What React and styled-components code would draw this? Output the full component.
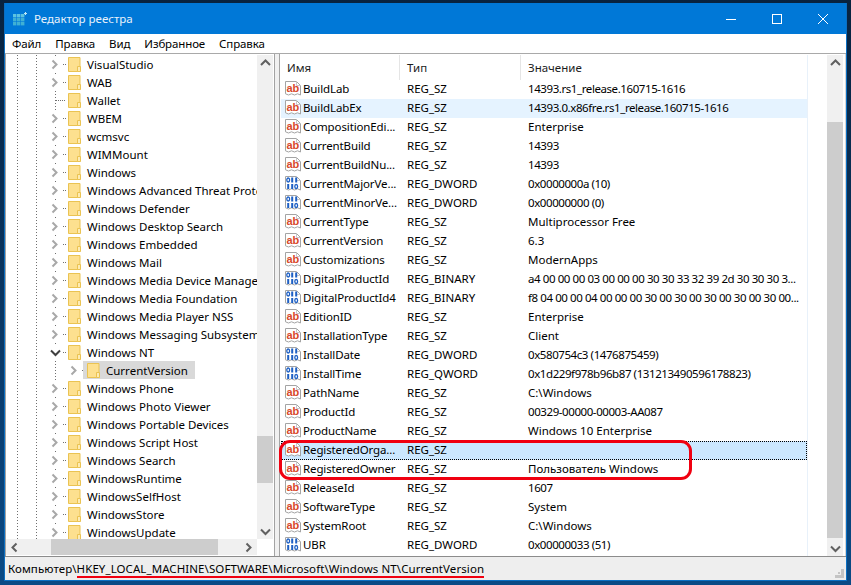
import React from "react";
import styled, { createGlobalStyle } from "styled-components";

const treeItems = [
  { name: "VisualStudio", arrow: true },
  { name: "WAB", arrow: true },
  { name: "Wallet", arrow: false },
  { name: "WBEM", arrow: true },
  { name: "wcmsvc", arrow: true },
  { name: "WIMMount", arrow: true },
  { name: "Windows", arrow: true },
  { name: "Windows Advanced Threat Protection", arrow: true },
  { name: "Windows Defender", arrow: true },
  { name: "Windows Desktop Search", arrow: true },
  { name: "Windows Embedded", arrow: true },
  { name: "Windows Mail", arrow: true },
  { name: "Windows Media Device Manager", arrow: true },
  { name: "Windows Media Foundation", arrow: true },
  { name: "Windows Media Player NSS", arrow: true },
  { name: "Windows Messaging Subsystem", arrow: true },
  { name: "Windows NT", arrow: true, open: true },
  { name: "CurrentVersion", arrow: true, child: true },
  { name: "Windows Phone", arrow: true },
  { name: "Windows Photo Viewer", arrow: true },
  { name: "Windows Portable Devices", arrow: true },
  { name: "Windows Script Host", arrow: true },
  { name: "Windows Search", arrow: true },
  { name: "WindowsRuntime", arrow: true },
  { name: "WindowsSelfHost", arrow: true },
  { name: "WindowsStore", arrow: true },
  { name: "WindowsUpdate", arrow: true },
];

const rowsBefore = [
  ["BuildLab", "REG_SZ", "14393.rs1_release.160715-1616"],
  ["BuildLabEx", "REG_SZ", "14393.0.x86fre.rs1_release.160715-1616", "hover"],
  ["CompositionEdi...", "REG_SZ", "Enterprise"],
  ["CurrentBuild", "REG_SZ", "14393"],
  ["CurrentBuildNu...", "REG_SZ", "14393"],
  ["CurrentMajorVe...", "REG_DWORD", "0x0000000a (10)"],
  ["CurrentMinorVe...", "REG_DWORD", "0x00000000 (0)"],
  ["CurrentType", "REG_SZ", "Multiprocessor Free"],
  ["CurrentVersion", "REG_SZ", "6.3"],
  ["Customizations", "REG_SZ", "ModernApps"],
  ["DigitalProductId", "REG_BINARY", "a4 00 00 00 03 00 00 00 30 30 33 32 39 2d 30 30 30 3..."],
  ["DigitalProductId4", "REG_BINARY", "f8 04 00 00 04 00 00 00 30 00 30 00 30 00 30 00 30 00..."],
  ["EditionID", "REG_SZ", "Enterprise"],
  ["InstallationType", "REG_SZ", "Client"],
  ["InstallDate", "REG_DWORD", "0x580754c3 (1476875459)"],
  ["InstallTime", "REG_QWORD", "0x1d229f978b96b87 (131213490596178823)"],
  ["PathName", "REG_SZ", "C:\\Windows"],
  ["ProductId", "REG_SZ", "00329-00000-00003-AA087"],
  ["ProductName", "REG_SZ", "Windows 10 Enterprise"],
];

const rowsMarked = [
  ["RegisteredOrga...", "REG_SZ", "", "selected"],
  ["RegisteredOwner", "REG_SZ", "Пользователь Windows"],
];

const rowsAfter = [
  ["ReleaseId", "REG_SZ", "1607"],
  ["SoftwareType", "REG_SZ", "System"],
  ["SystemRoot", "REG_SZ", "C:\\Windows"],
  ["UBR", "REG_DWORD", "0x00000033 (51)"],
];

const GlobalStyle = createGlobalStyle`
  html, body {
    margin: 0;
    padding: 0;
    width: 851px;
    height: 585px;
    overflow: hidden;
    background: linear-gradient(180deg, #08233f 0%, #0a3560 50%, #0a4a85 100%);
  }
  * {
    box-sizing: border-box;
  }
`;

const Desktop = styled.div`
  width: 851px;
  height: 585px;
  padding: 3px 4px 4px 4px;
  font-family: "Noto Sans", "Open Sans", sans-serif;
  font-size: 11.5px;
  color: #000;
`;

const Window = styled.div`
  width: 843px;
  height: 578px;
  border: 1px solid #0b6fc2;
  border-top: 0;
  display: flex;
  flex-direction: column;
  background: #f0f0f0;
`;

const TitleBar = styled.div`
  height: 31px;
  background: #0078d7;
  display: flex;
  align-items: center;
  padding-left: 8px;
  color: #e8f2fb;
`;

const TitleText = styled.span`
  margin-left: 7px;
  flex: 1;
`;

const WinButton = styled.div`
  width: 46px;
  height: 31px;
  display: flex;
  align-items: center;
  justify-content: center;
`;

const MenuBar = styled.div`
  height: 20px;
  background: #fff;
  display: flex;
  align-items: center;
  padding-left: 7px;
  border-bottom: 1px solid #a9a9a9;
  letter-spacing: -0.12px;
`;

const MenuItem = styled.span`
  margin-right: ${(p) => p.$gap}px;
`;

const Panes = styled.div`
  height: 503px;
  display: grid;
  grid-template-columns: 270px 567px;
  column-gap: 4px;
  border-bottom: 1px solid #8c8c8c;
`;

const TreePane = styled.div`
  border: 1px solid #a3a3a3;
  border-top: 0;
  border-bottom: 0;
  background: #fff;
  display: grid;
  grid-template-columns: 251px 16px;
  grid-template-rows: 484px 16px;
  padding-top: 1px;
`;

const TreeBody = styled.div`
  overflow: hidden;
`;

const TreeRow = styled.div`
  height: 18px;
  width: 251px;
  display: flex;
  align-items: center;
  white-space: nowrap;
  overflow: hidden;
  padding-left: 11px;
`;

const Guide = styled.div`
  width: ${(p) => p.$width}px;
  height: 18px;
  flex: none;
  position: relative;
  background-image: ${(p) =>
    p.$plain ? "none" : "linear-gradient(180deg, #6f6f6f 34%, transparent 34%)"};
  background-size: 1px 3px;
  background-repeat: repeat-y;
`;

const Arrow = styled.div`
  position: absolute;
  left: -5px;
  top: 2px;
  width: 11px;
  height: 14px;
  display: flex;
  align-items: center;
  justify-content: center;
  background: #fff;
`;

const Connector = styled.div`
  position: absolute;
  top: 9px;
  left: ${(p) => p.$left}px;
  width: ${(p) => p.$width}px;
  height: 1px;
  background-image: linear-gradient(90deg, #6f6f6f 50%, transparent 50%);
  background-size: 2px 1px;
`;

const FolderBox = styled.div`
  display: flex;
  align-items: center;
  flex: none;
  height: 18px;
  background: ${(p) => (p.$active ? "#d9d9d9" : "transparent")};
  margin-left: ${(p) => (p.$active ? "-4px" : "0")};
  padding: 0 ${(p) => (p.$active ? "7px" : "0")} 0 ${(p) => (p.$active ? "4px" : "0")};
`;

const FolderLabel = styled.span`
  margin-left: 6px;
`;

const VScroll = styled.div`
  width: 16px;
  background: #f0f0f0;
  display: flex;
  flex-direction: column;
`;

const HScroll = styled.div`
  height: 16px;
  background: #f0f0f0;
  display: flex;
`;

const ScrollArrow = styled.div`
  width: 16px;
  height: 16px;
  flex: none;
  display: flex;
  align-items: center;
  justify-content: center;
`;

const Track = styled.div`
  flex: 1;
  display: flex;
  flex-direction: ${(p) => (p.$horizontal ? "row" : "column")};
`;

const Thumb = styled.div`
  background: #cdcdcd;
  ${(p) =>
    p.$horizontal
      ? `margin-left: ${p.$offset}px; width: ${p.$size}px;`
      : `margin-top: ${p.$offset}px; height: ${p.$size}px;`}
`;

const ListPane = styled.div`
  border-left: 1px solid #a3a3a3;
  border-right: 1px solid #d5d5d5;
  background: #fff;
  display: flex;
  padding-top: 1px;
`;

const ListColumn = styled.div`
  width: 528px;
  flex: none;
  border-right: 1px solid #e8f1fa;
  margin-right: 19px;
`;

const ListHeader = styled.div`
  height: 25px;
  display: grid;
  grid-template-columns: 120px 121px 1fr;
  align-items: stretch;
  color: #1c1c1c;
`;

const HeaderCell = styled.div`
  padding-left: 7px;
  padding-bottom: 1px;
  border-right: 1px solid ${(p) => (p.$last ? "transparent" : "#e5e5e5")};
  display: flex;
  align-items: center;
`;

const Row = styled.div`
  height: 19px;
  margin-left: 1px;
  padding-bottom: 2px;
  display: grid;
  grid-template-columns: 119px 121px 1fr;
  align-items: center;
  background: ${(p) => (p.$kind === "hover" ? "#e5f3ff" : p.$kind === "selected" ? "#cce8ff" : "transparent")};
  outline: ${(p) => (p.$kind === "selected" ? "1px dotted #000" : "none")};
  outline-offset: -1px;
  white-space: nowrap;
`;

const NameCell = styled.div`
  display: flex;
  align-items: center;
  padding-left: 4px;
  gap: 2px;
  overflow: hidden;
  letter-spacing: -0.12px;
`;

const Cell = styled.div`
  padding-left: 7px;
  overflow: hidden;
  letter-spacing: ${(p) => (p.$tight ? "-0.42px" : "0")};
`;

const MarkedGroup = styled.div`
  position: relative;
`;

const RedFrame = styled.div`
  position: absolute;
  left: -1px;
  top: -1px;
  width: 413px;
  height: 40px;
  border: 3px solid #f00010;
  border-radius: 11px;
  pointer-events: none;
`;

const StatusBar = styled.div`
  flex: 1;
  background: #eeeeee;
  display: flex;
  align-items: flex-start;
  padding: 4px 0 0 3px;
  position: relative;
  letter-spacing: 0.08px;
`;

const Marked = styled.span`
  border-bottom: 2px solid #f00010;
`;

const Grip = styled.div`
  position: absolute;
  right: 2px;
  bottom: 2px;
  width: 9px;
  height: 9px;
  display: flex;
`;

const TitleIcon = () => (
  <svg width="14" height="14" viewBox="0 0 14 14">
    {[0, 1, 2].map((r) =>
      [0, 1, 2].map((c) => (
        <rect key={`${r}${c}`} x={c * 4} y={r * 4 + 2} width="3.4" height="3.4" fill={r === 0 ? "#5cc3e0" : "#3fb0d4"} />
      ))
    )}
    <path d="M12.5 0v3M11 1.5h3" stroke="#bfe8f5" strokeWidth="1" />
  </svg>
);

const Folder = () => (
  <svg width="13" height="15" viewBox="0 0 13 15">
    <path d="M.5.5h11.5v14H.5z" fill="#fde08f" stroke="#eac352" />
    <path d="M9.5 9.5h3v5h-3z" fill="#fdebb5" stroke="#eac352" />
  </svg>
);

const Chevron = ({ dir, color = "#a8a8a8" }) => {
  const paths = {
    right: "M2.5 1.5 6.5 5.5 2.5 9.5",
    left: "M7.5 1.5 3.5 5.5 7.5 9.5",
    up: "M1 7 5.5 2.5 10 7",
    down: "M1 3.5 5.5 8 10 3.5",
  };
  return (
    <svg width="11" height="11" viewBox="0 0 11 11">
      <path d={paths[dir]} fill="none" stroke={color} strokeWidth="2" />
    </svg>
  );
};

const Page = () => (
  <>
    <path
      d="M.5.5h11l4 4v9.5l-3-1.2-3 1.2-3-1.2-3 1.2-3-1.2z"
      fill="#fff"
      stroke="#a4a4a4"
    />
    <path d="M11.5.5v4h4" fill="none" stroke="#c8c8c8" />
  </>
);

const StringIcon = () => (
  <svg width="16" height="16" viewBox="0 0 16 16" style={{ flex: "none" }}>
    <Page />
    <text x="1.5" y="10.5" fontFamily="Liberation Sans, sans-serif" fontWeight="700" fontSize="11" fill="#d8482a">
      ab
    </text>
  </svg>
);

const BinaryIcon = () => {
  const bit = (v, x, y) =>
    v ? (
      <rect key={`${x}${y}`} x={x + 0.7} y={y} width="2" height="5" fill="#1d5fc4" />
    ) : (
      <ellipse key={`${x}${y}`} cx={x + 1.7} cy={y + 2.5} rx="1.4" ry="2" fill="none" stroke="#1d5fc4" strokeWidth="1.3" />
    );
  return (
    <svg width="16" height="16" viewBox="0 0 16 16" style={{ flex: "none" }}>
      <Page />
      {[0, 1, 1].map((v, i) => bit(v, 1.5 + i * 4, 1.5))}
      {[1, 1, 0].map((v, i) => bit(v, 1.5 + i * 4, 8))}
    </svg>
  );
};

const ValueRow = ({ row }) => {
  const digits = (row[2].match(/\d/g) || []).length;
  return (
    <Row $kind={row[3]}>
      <NameCell>
        {row[1] === "REG_SZ" ? <StringIcon /> : <BinaryIcon />}
        <span>{row[0]}</span>
      </NameCell>
      <Cell>{row[1]}</Cell>
      <Cell $tight={digits > 2}>{row[2]}</Cell>
    </Row>
  );
};

const TreeItem = ({ item }) => (
  <TreeRow>
    <Guide $width={19} />
    <Guide $width={19} />
    {item.child ? (
      <>
        <Guide $width={19} />
        <Guide $width={13} $plain>
          <Arrow>
            <Chevron dir="right" />
          </Arrow>
          <Connector $left={8} $width={2} />
        </Guide>
      </>
    ) : (
      <Guide $width={13}>
        {item.arrow ? (
          <>
            <Arrow>
              <Chevron dir={item.open ? "down" : "right"} color={item.open ? "#404040" : "#a8a8a8"} />
            </Arrow>
            <Connector $left={8} $width={3} />
          </>
        ) : (
          <Connector $left={1} $width={10} />
        )}
      </Guide>
    )}
    <FolderBox $active={item.child}>
      <Folder />
      <FolderLabel>{item.name}</FolderLabel>
    </FolderBox>
  </TreeRow>
);

const App = () => (
  <Desktop>
    <GlobalStyle />
    <Window>
      <TitleBar>
        <TitleIcon />
        <TitleText>Редактор реестра</TitleText>
        <WinButton>
          <svg width="10" height="10" viewBox="0 0 10 10">
            <path d="M0 5.5h10" stroke="#fff" />
          </svg>
        </WinButton>
        <WinButton>
          <svg width="10" height="10" viewBox="0 0 10 10">
            <rect x=".5" y=".5" width="9" height="9" fill="none" stroke="#fff" />
          </svg>
        </WinButton>
        <WinButton>
          <svg width="10" height="10" viewBox="0 0 10 10">
            <path d="M0 0l10 10M10 0L0 10" stroke="#fff" />
          </svg>
        </WinButton>
      </TitleBar>
      <MenuBar>
        <MenuItem $gap={14}>Файл</MenuItem>
        <MenuItem $gap={14}>Правка</MenuItem>
        <MenuItem $gap={14}>Вид</MenuItem>
        <MenuItem $gap={14}>Избранное</MenuItem>
        <MenuItem $gap={0}>Справка</MenuItem>
      </MenuBar>
      <Panes>
        <TreePane>
          <TreeBody>
            {treeItems.map((item) => (
              <TreeItem key={item.name} item={item} />
            ))}
          </TreeBody>
          <VScroll>
            <ScrollArrow>
              <Chevron dir="up" color="#606060" />
            </ScrollArrow>
            <Track>
              <Thumb $offset={365} $size={47} />
            </Track>
            <ScrollArrow>
              <Chevron dir="down" color="#606060" />
            </ScrollArrow>
          </VScroll>
          <HScroll>
            <ScrollArrow>
              <Chevron dir="left" color="#606060" />
            </ScrollArrow>
            <Track $horizontal>
              <Thumb $horizontal $offset={29} $size={167} />
            </Track>
            <ScrollArrow>
              <Chevron dir="right" color="#606060" />
            </ScrollArrow>
          </HScroll>
        </TreePane>
        <ListPane>
          <ListColumn>
            <ListHeader>
              <HeaderCell>Имя</HeaderCell>
              <HeaderCell>Тип</HeaderCell>
              <HeaderCell $last>Значение</HeaderCell>
            </ListHeader>
            {rowsBefore.map((row) => (
              <ValueRow key={row[0]} row={row} />
            ))}
            <MarkedGroup>
              {rowsMarked.map((row) => (
                <ValueRow key={row[0]} row={row} />
              ))}
              <RedFrame />
            </MarkedGroup>
            {rowsAfter.map((row) => (
              <ValueRow key={row[0]} row={row} />
            ))}
          </ListColumn>
          <VScroll>
            <ScrollArrow>
              <Chevron dir="up" color="#606060" />
            </ScrollArrow>
            <Track>
              <Thumb $offset={51} $size={416} />
            </Track>
            <ScrollArrow>
              <Chevron dir="down" color="#606060" />
            </ScrollArrow>
          </VScroll>
        </ListPane>
      </Panes>
      <StatusBar>
        <span>
          Компьютер\
          <Marked>HKEY_LOCAL_MACHINE\SOFTWARE\Microsoft\Windows NT\CurrentVersion</Marked>
        </span>
        <Grip>
          <svg width="9" height="9" viewBox="0 0 9 9">
            <path d="M6 0h3v3H6zM3 3h2v2H3zM6 3h3v3H6zM0 6h3v3H0zM3 6h3v3H3zM6 6h3v3H6z" fill="#c4c4c4" />
          </svg>
        </Grip>
      </StatusBar>
    </Window>
  </Desktop>
);

export default App;
